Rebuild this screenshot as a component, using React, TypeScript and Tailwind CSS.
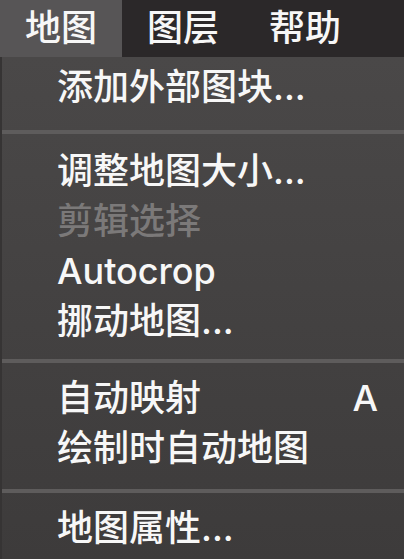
import React from "react";

const font = { fontFamily: "Inter, 'Noto Sans CJK SC', sans-serif" };

function Item({ label, shortcut, disabled }: { label: string; shortcut?: string; disabled?: boolean }) {
  return (
    <div
      className={`flex h-[50px] items-center justify-between pl-[55px] pr-[26px] text-[36px] font-medium leading-none pb-[3px] ${
        disabled ? "text-[#7b7979]" : "text-[#f7f7f7]"
      }`}
    >
      <span>{label}</span>
      {shortcut && <span>{shortcut}</span>}
    </div>
  );
}

function Sep({ mt, mb }: { mt: string; mb: string }) {
  return <div className={`h-[4px] bg-[#5e5c5c] ${mt} ${mb}`} />;
}

export default function App() {
  return (
    <div className="w-[404px] h-[559px] overflow-hidden bg-[#444242] flex flex-col" style={font}>
      <div className="flex h-[57px] bg-[#2b2829] text-[36px] font-medium text-[#f7f7f7] leading-none">
        <div className="flex items-center px-[25px] pb-[2px] bg-[#575556]">地图</div>
        <div className="flex items-center px-[25px] pb-[2px]">图层</div>
        <div className="flex items-center px-[25px] pb-[2px]">帮助</div>
      </div>
      <div className="flex-1 flex flex-col pt-[6px] border-l-[2px] border-[#363434] bg-gradient-to-b from-[#4a4848] to-[#3d3b3b]">
        <Item label="添加外部图块..." />
        <Sep mt="mt-[17px]" mb="mb-[13px]" />
        <Item label="调整地图大小..." />
        <Item label="剪辑选择" disabled />
        <Item label="Autocrop" />
        <Item label="挪动地图..." />
        <Sep mt="mt-[12px]" mb="mb-[11px]" />
        <Item label="自动映射" shortcut="A" />
        <Item label="绘制时自动地图" />
        <Sep mt="mt-[15px]" mb="mb-[11px]" />
        <Item label="地图属性..." />
      </div>
    </div>
  );
}
